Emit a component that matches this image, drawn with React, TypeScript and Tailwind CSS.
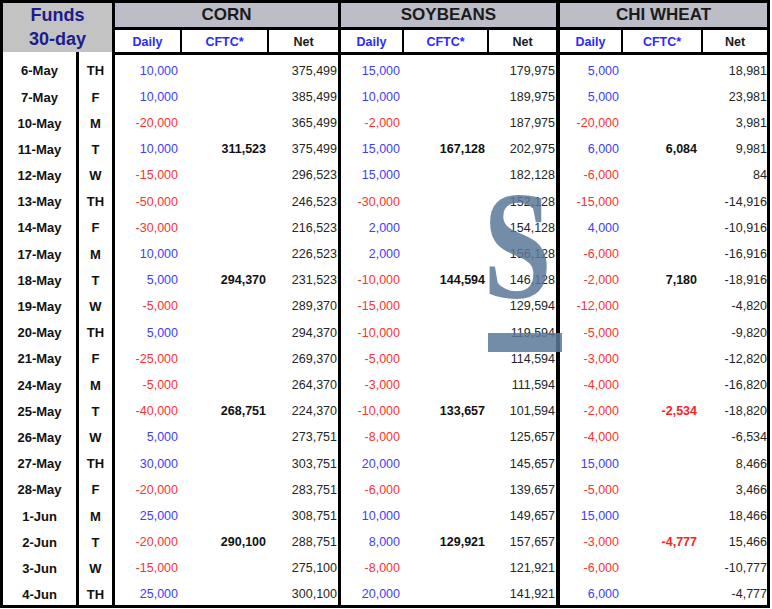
import React from 'react';

type Row = {
  date: string;
  day: string;
  corn: [string, string, string];
  soy: [string, string, string];
  wheat: [string, string, string];
};

const rows: Row[] = [
  { date: '6-May', day: 'TH', corn: ['10,000', '', '375,499'], soy: ['15,000', '', '179,975'], wheat: ['5,000', '', '18,981'] },
  { date: '7-May', day: 'F', corn: ['10,000', '', '385,499'], soy: ['10,000', '', '189,975'], wheat: ['5,000', '', '23,981'] },
  { date: '10-May', day: 'M', corn: ['-20,000', '', '365,499'], soy: ['-2,000', '', '187,975'], wheat: ['-20,000', '', '3,981'] },
  { date: '11-May', day: 'T', corn: ['10,000', '311,523', '375,499'], soy: ['15,000', '167,128', '202,975'], wheat: ['6,000', '6,084', '9,981'] },
  { date: '12-May', day: 'W', corn: ['-15,000', '', '296,523'], soy: ['15,000', '', '182,128'], wheat: ['-6,000', '', '84'] },
  { date: '13-May', day: 'TH', corn: ['-50,000', '', '246,523'], soy: ['-30,000', '', '152,128'], wheat: ['-15,000', '', '-14,916'] },
  { date: '14-May', day: 'F', corn: ['-30,000', '', '216,523'], soy: ['2,000', '', '154,128'], wheat: ['4,000', '', '-10,916'] },
  { date: '17-May', day: 'M', corn: ['10,000', '', '226,523'], soy: ['2,000', '', '156,128'], wheat: ['-6,000', '', '-16,916'] },
  { date: '18-May', day: 'T', corn: ['5,000', '294,370', '231,523'], soy: ['-10,000', '144,594', '146,128'], wheat: ['-2,000', '7,180', '-18,916'] },
  { date: '19-May', day: 'W', corn: ['-5,000', '', '289,370'], soy: ['-15,000', '', '129,594'], wheat: ['-12,000', '', '-4,820'] },
  { date: '20-May', day: 'TH', corn: ['5,000', '', '294,370'], soy: ['-10,000', '', '119,594'], wheat: ['-5,000', '', '-9,820'] },
  { date: '21-May', day: 'F', corn: ['-25,000', '', '269,370'], soy: ['-5,000', '', '114,594'], wheat: ['-3,000', '', '-12,820'] },
  { date: '24-May', day: 'M', corn: ['-5,000', '', '264,370'], soy: ['-3,000', '', '111,594'], wheat: ['-4,000', '', '-16,820'] },
  { date: '25-May', day: 'T', corn: ['-40,000', '268,751', '224,370'], soy: ['-10,000', '133,657', '101,594'], wheat: ['-2,000', '-2,534', '-18,820'] },
  { date: '26-May', day: 'W', corn: ['5,000', '', '273,751'], soy: ['-8,000', '', '125,657'], wheat: ['-4,000', '', '-6,534'] },
  { date: '27-May', day: 'TH', corn: ['30,000', '', '303,751'], soy: ['20,000', '', '145,657'], wheat: ['15,000', '', '8,466'] },
  { date: '28-May', day: 'F', corn: ['-20,000', '', '283,751'], soy: ['-6,000', '', '139,657'], wheat: ['-5,000', '', '3,466'] },
  { date: '1-Jun', day: 'M', corn: ['25,000', '', '308,751'], soy: ['10,000', '', '149,657'], wheat: ['15,000', '', '18,466'] },
  { date: '2-Jun', day: 'T', corn: ['-20,000', '290,100', '288,751'], soy: ['8,000', '129,921', '157,657'], wheat: ['-3,000', '-4,777', '15,466'] },
  { date: '3-Jun', day: 'W', corn: ['-15,000', '', '275,100'], soy: ['-8,000', '', '121,921'], wheat: ['-6,000', '', '-10,777'] },
  { date: '4-Jun', day: 'TH', corn: ['25,000', '', '300,100'], soy: ['20,000', '', '141,921'], wheat: ['6,000', '', '-4,777'] },
];

const dailyColor = (v: string) => (v.startsWith('-') ? 'text-[#ff3030]' : 'text-[#3d3dff]');
const cftcColor = (v: string) => (v.startsWith('-') ? 'text-[#ff2020]' : 'text-[#111111]');

// header for one commodity block
const Commodity = ({
  title,
  widths,
  last,
}: {
  title: string;
  widths: [string, string, string];
  last?: string;
}) => (
  <div className={`flex flex-col ${last ?? ''}`}>
    <div className="h-[24px] bg-[#bdbdc8] flex items-center justify-center text-[17px] font-bold text-[#1b1b1b] border-b-[3px] border-black box-content">
      {title}
    </div>
    <div className="h-[22px] flex border-b-[3px] border-black box-content text-[12.5px] font-bold text-[#2a2aff]">
      <div className={`${widths[0]} border-r-2 border-black flex items-center justify-center pt-[3px]`}>Daily</div>
      <div className={`${widths[1]} border-r-2 border-black flex items-center justify-center pt-[3px]`}>CFTC*</div>
      <div className={`${widths[2]} flex items-center justify-center pt-[3px] text-[#1b1b1b]`}>Net</div>
    </div>
  </div>
);

const cell = 'flex items-center justify-end pt-[6px]';

export default function App() {
  return (
    <div className="w-[772px] h-[609px] bg-white relative overflow-hidden" style={{ fontFamily: '"Liberation Sans", Arial, sans-serif' }}>
      <div className="w-[770px] h-[608px] border-[3px] border-black flex flex-col">
        {/* header */}
        <div className="flex h-[52px]">
          <div className="w-[112px] border-r-[3px] border-black flex flex-col">
            <div className="h-[49px] bg-[#c3c3c3] flex flex-col items-center text-[18px] font-bold text-[#1c1c8c] leading-[25px]">
              <span>Funds</span>
              <span className="-mt-[1px]">30-day</span>
            </div>
            <div className="h-[3px] w-[76px] border-r-[3px] border-black" />
          </div>
          <Commodity title="CORN" widths={['w-[67px]', 'w-[87px]', 'w-[69px]']} last="w-[226px] border-r-[3px] border-black" />
          <Commodity title="SOYBEANS" widths={['w-[63px]', 'w-[85px]', 'w-[67px]']} last="w-[219px] border-r-4 border-black" />
          <Commodity title="CHI WHEAT" widths={['w-[63px]', 'w-[80px]', 'w-[64px]']} last="w-[207px]" />
        </div>

        {/* data rows */}
        <div className="flex flex-col text-[12.5px]">
          {rows.map((r) => (
            <div key={r.date} className="flex h-[26.19px]">
              <div className="w-[76px] border-r-[3px] border-black flex items-center justify-center pt-[6px] text-[13px] font-bold text-[#111]">
                {r.date}
              </div>
              <div className="w-[36px] border-r-[3px] border-black flex items-center justify-center pt-[6px] text-[13px] font-bold text-[#111]">
                {r.day}
              </div>

              <div className={`w-[67px] pr-[4px] ${cell} ${dailyColor(r.corn[0])}`}>{r.corn[0]}</div>
              <div className={`w-[87px] pr-[3px] ${cell} font-bold ${cftcColor(r.corn[1])}`}>{r.corn[1]}</div>
              <div className={`w-[72px] pr-[1px] border-r-[3px] border-black ${cell} text-[#262626]`}>{r.corn[2]}</div>

              <div className={`w-[63px] pr-[4px] ${cell} ${dailyColor(r.soy[0])}`}>{r.soy[0]}</div>
              <div className={`w-[85px] pr-[4px] ${cell} font-bold ${cftcColor(r.soy[1])}`}>{r.soy[1]}</div>
              <div className={`w-[71px] pr-[1px] border-r-4 border-black ${cell} text-[#262626]`}>{r.soy[2]}</div>

              <div className={`w-[63px] pr-[4px] ${cell} ${dailyColor(r.wheat[0])}`}>{r.wheat[0]}</div>
              <div className={`w-[80px] pr-[6px] ${cell} font-bold ${cftcColor(r.wheat[1])}`}>{r.wheat[1]}</div>
              <div className={`w-[64px] pr-0 ${cell} text-[#262626]`}>{r.wheat[2]}</div>
            </div>
          ))}
        </div>
      </div>

      {/* watermark */}
      <span
        className="absolute left-[483px] top-[168px] text-[155px] font-bold leading-none text-[#5a7898]/85 origin-left scale-x-[0.8] pointer-events-none"
        style={{ fontFamily: '"Liberation Serif", "Times New Roman", serif' }}
      >
        S
      </span>
      <div className="absolute left-[488px] top-[333px] w-[74px] h-[19px] bg-[#5a7898]/85" />
    </div>
  );
}
